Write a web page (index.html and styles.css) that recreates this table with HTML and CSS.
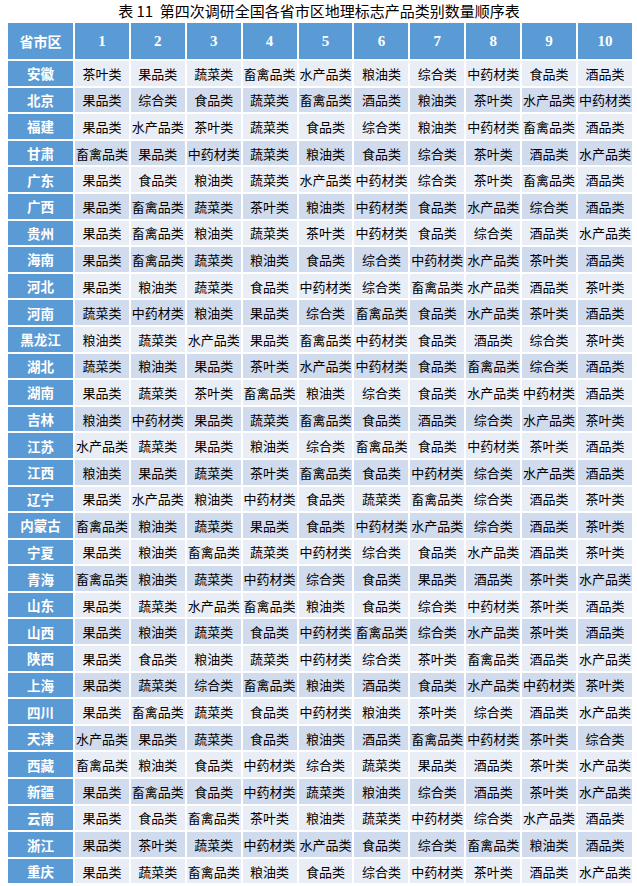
FILE: index.html
```html
<!DOCTYPE html>
<html lang="zh">
<head>
<meta charset="utf-8">
<title>表 11</title>
<link rel="stylesheet" href="styles.css">
</head>
<body>
<div class="page">
<div class="title">表 11&nbsp; 第四次调研全国各省市区地理标志产品类别数量顺序表</div>
<table class="grid">
<colgroup><col class="c-prov"><col span="10" class="c-rank"></colgroup>
<thead>
<tr><th>省市区</th><th>1</th><th>2</th><th>3</th><th>4</th><th>5</th><th>6</th><th>7</th><th>8</th><th>9</th><th>10</th></tr>
</thead>
<tbody id="rows"></tbody>
</table>
</div>
<script src="script.js"></script>
</body>
</html>
```

FILE: script.js
```js
const data = [
["安徽","茶叶类 果品类 蔬菜类 畜禽品类 水产品类 粮油类 综合类 中药材类 食品类 酒品类"],
["北京","果品类 综合类 食品类 蔬菜类 畜禽品类 酒品类 粮油类 茶叶类 水产品类 中药材类"],
["福建","果品类 水产品类 茶叶类 蔬菜类 食品类 综合类 粮油类 中药材类 畜禽品类 酒品类"],
["甘肃","畜禽品类 果品类 中药材类 蔬菜类 粮油类 食品类 综合类 茶叶类 酒品类 水产品类"],
["广东","果品类 食品类 粮油类 蔬菜类 水产品类 中药材类 综合类 茶叶类 畜禽品类 酒品类"],
["广西","果品类 畜禽品类 蔬菜类 茶叶类 粮油类 中药材类 食品类 水产品类 综合类 酒品类"],
["贵州","果品类 畜禽品类 粮油类 蔬菜类 茶叶类 中药材类 食品类 综合类 酒品类 水产品类"],
["海南","果品类 畜禽品类 蔬菜类 粮油类 食品类 综合类 中药材类 水产品类 茶叶类 酒品类"],
["河北","果品类 粮油类 蔬菜类 食品类 中药材类 综合类 畜禽品类 水产品类 酒品类 茶叶类"],
["河南","蔬菜类 中药材类 粮油类 果品类 综合类 畜禽品类 食品类 水产品类 茶叶类 酒品类"],
["黑龙江","粮油类 蔬菜类 水产品类 果品类 畜禽品类 中药材类 食品类 酒品类 综合类 茶叶类"],
["湖北","蔬菜类 粮油类 果品类 茶叶类 水产品类 中药材类 食品类 畜禽品类 综合类 酒品类"],
["湖南","果品类 蔬菜类 茶叶类 畜禽品类 粮油类 综合类 食品类 水产品类 中药材类 酒品类"],
["吉林","粮油类 中药材类 果品类 蔬菜类 畜禽品类 食品类 酒品类 综合类 水产品类 茶叶类"],
["江苏","水产品类 蔬菜类 果品类 粮油类 综合类 畜禽品类 食品类 中药材类 茶叶类 酒品类"],
["江西","粮油类 果品类 蔬菜类 茶叶类 畜禽品类 食品类 中药材类 综合类 水产品类 酒品类"],
["辽宁","果品类 水产品类 粮油类 中药材类 食品类 蔬菜类 畜禽品类 综合类 酒品类 茶叶类"],
["内蒙古","畜禽品类 粮油类 蔬菜类 果品类 食品类 中药材类 水产品类 综合类 酒品类 茶叶类"],
["宁夏","果品类 粮油类 畜禽品类 蔬菜类 中药材类 综合类 食品类 水产品类 酒品类 茶叶类"],
["青海","畜禽品类 粮油类 蔬菜类 中药材类 综合类 食品类 果品类 酒品类 茶叶类 水产品类"],
["山东","果品类 蔬菜类 水产品类 畜禽品类 粮油类 食品类 综合类 中药材类 茶叶类 酒品类"],
["山西","果品类 粮油类 蔬菜类 食品类 中药材类 畜禽品类 综合类 水产品类 茶叶类 酒品类"],
["陕西","果品类 食品类 粮油类 蔬菜类 中药材类 综合类 茶叶类 畜禽品类 酒品类 水产品类"],
["上海","果品类 蔬菜类 综合类 畜禽品类 粮油类 酒品类 食品类 水产品类 中药材类 茶叶类"],
["四川","果品类 畜禽品类 蔬菜类 食品类 中药材类 粮油类 茶叶类 综合类 酒品类 水产品类"],
["天津","水产品类 果品类 蔬菜类 食品类 粮油类 酒品类 畜禽品类 中药材类 茶叶类 综合类"],
["西藏","畜禽品类 粮油类 食品类 中药材类 综合类 蔬菜类 果品类 酒品类 茶叶类 水产品类"],
["新疆","果品类 畜禽品类 食品类 中药材类 蔬菜类 粮油类 综合类 酒品类 茶叶类 水产品类"],
["云南","果品类 食品类 畜禽品类 茶叶类 粮油类 蔬菜类 中药材类 综合类 水产品类 酒品类"],
["浙江","果品类 茶叶类 蔬菜类 中药材类 水产品类 食品类 综合类 畜禽品类 粮油类 酒品类"],
["重庆","果品类 蔬菜类 畜禽品类 粮油类 食品类 综合类 中药材类 茶叶类 酒品类 水产品类"]
];
const tbody = document.getElementById("rows");
data.forEach(([prov, list], i) => {
  const tr = document.createElement("tr");
  tr.className = i % 2 === 0 ? "band-a" : "band-b";
  const th = document.createElement("th");
  th.textContent = prov;
  tr.appendChild(th);
  list.split(" ").forEach(v => {
    const td = document.createElement("td");
    td.textContent = v;
    tr.appendChild(td);
  });
  tbody.appendChild(tr);
});
```

FILE: styles.css
```css
html, body {
  margin: 0;
  padding: 0;
  background: #ffffff;
}
.page {
  padding: 0 5px 0 6px;
  font-family: "Noto Sans CJK SC", "Noto Sans", sans-serif;
  color: #000;
}
.title {
  text-align: center;
  font-size: 15px;
  line-height: 21px;
  height: 21px;
  color: #000;
  white-space: nowrap;
}
.grid {
  border-collapse: collapse;
  table-layout: fixed;
  width: 626px;
}
.c-prov { width: 67px; }
.c-rank { width: 55.9px; }
.grid th, .grid td {
  border: 2px solid #ffffff;
  padding: 0;
  text-align: center;
  white-space: nowrap;
  overflow: hidden;
}
.grid thead th {
  background: #5b9bd5;
  color: #ffffff;
  font-weight: bold;
  height: 36px;
  font-size: 15px;
  font-family: "Liberation Serif", "Noto Sans CJK SC", serif;
}
.grid thead th:first-child {
  font-family: "Noto Sans CJK SC", sans-serif;
  font-size: 14px;
}
.grid tbody th {
  background: #5b9bd5;
  color: #ffffff;
  font-weight: bold;
  font-size: 13.5px;
  height: 24.6px;
}
.grid tbody td {
  font-size: 13px;
  height: 24.6px;
  letter-spacing: 0;
}
.band-a td { background: #e9edf6; }
.band-b td { background: #d0dbee; }
```
